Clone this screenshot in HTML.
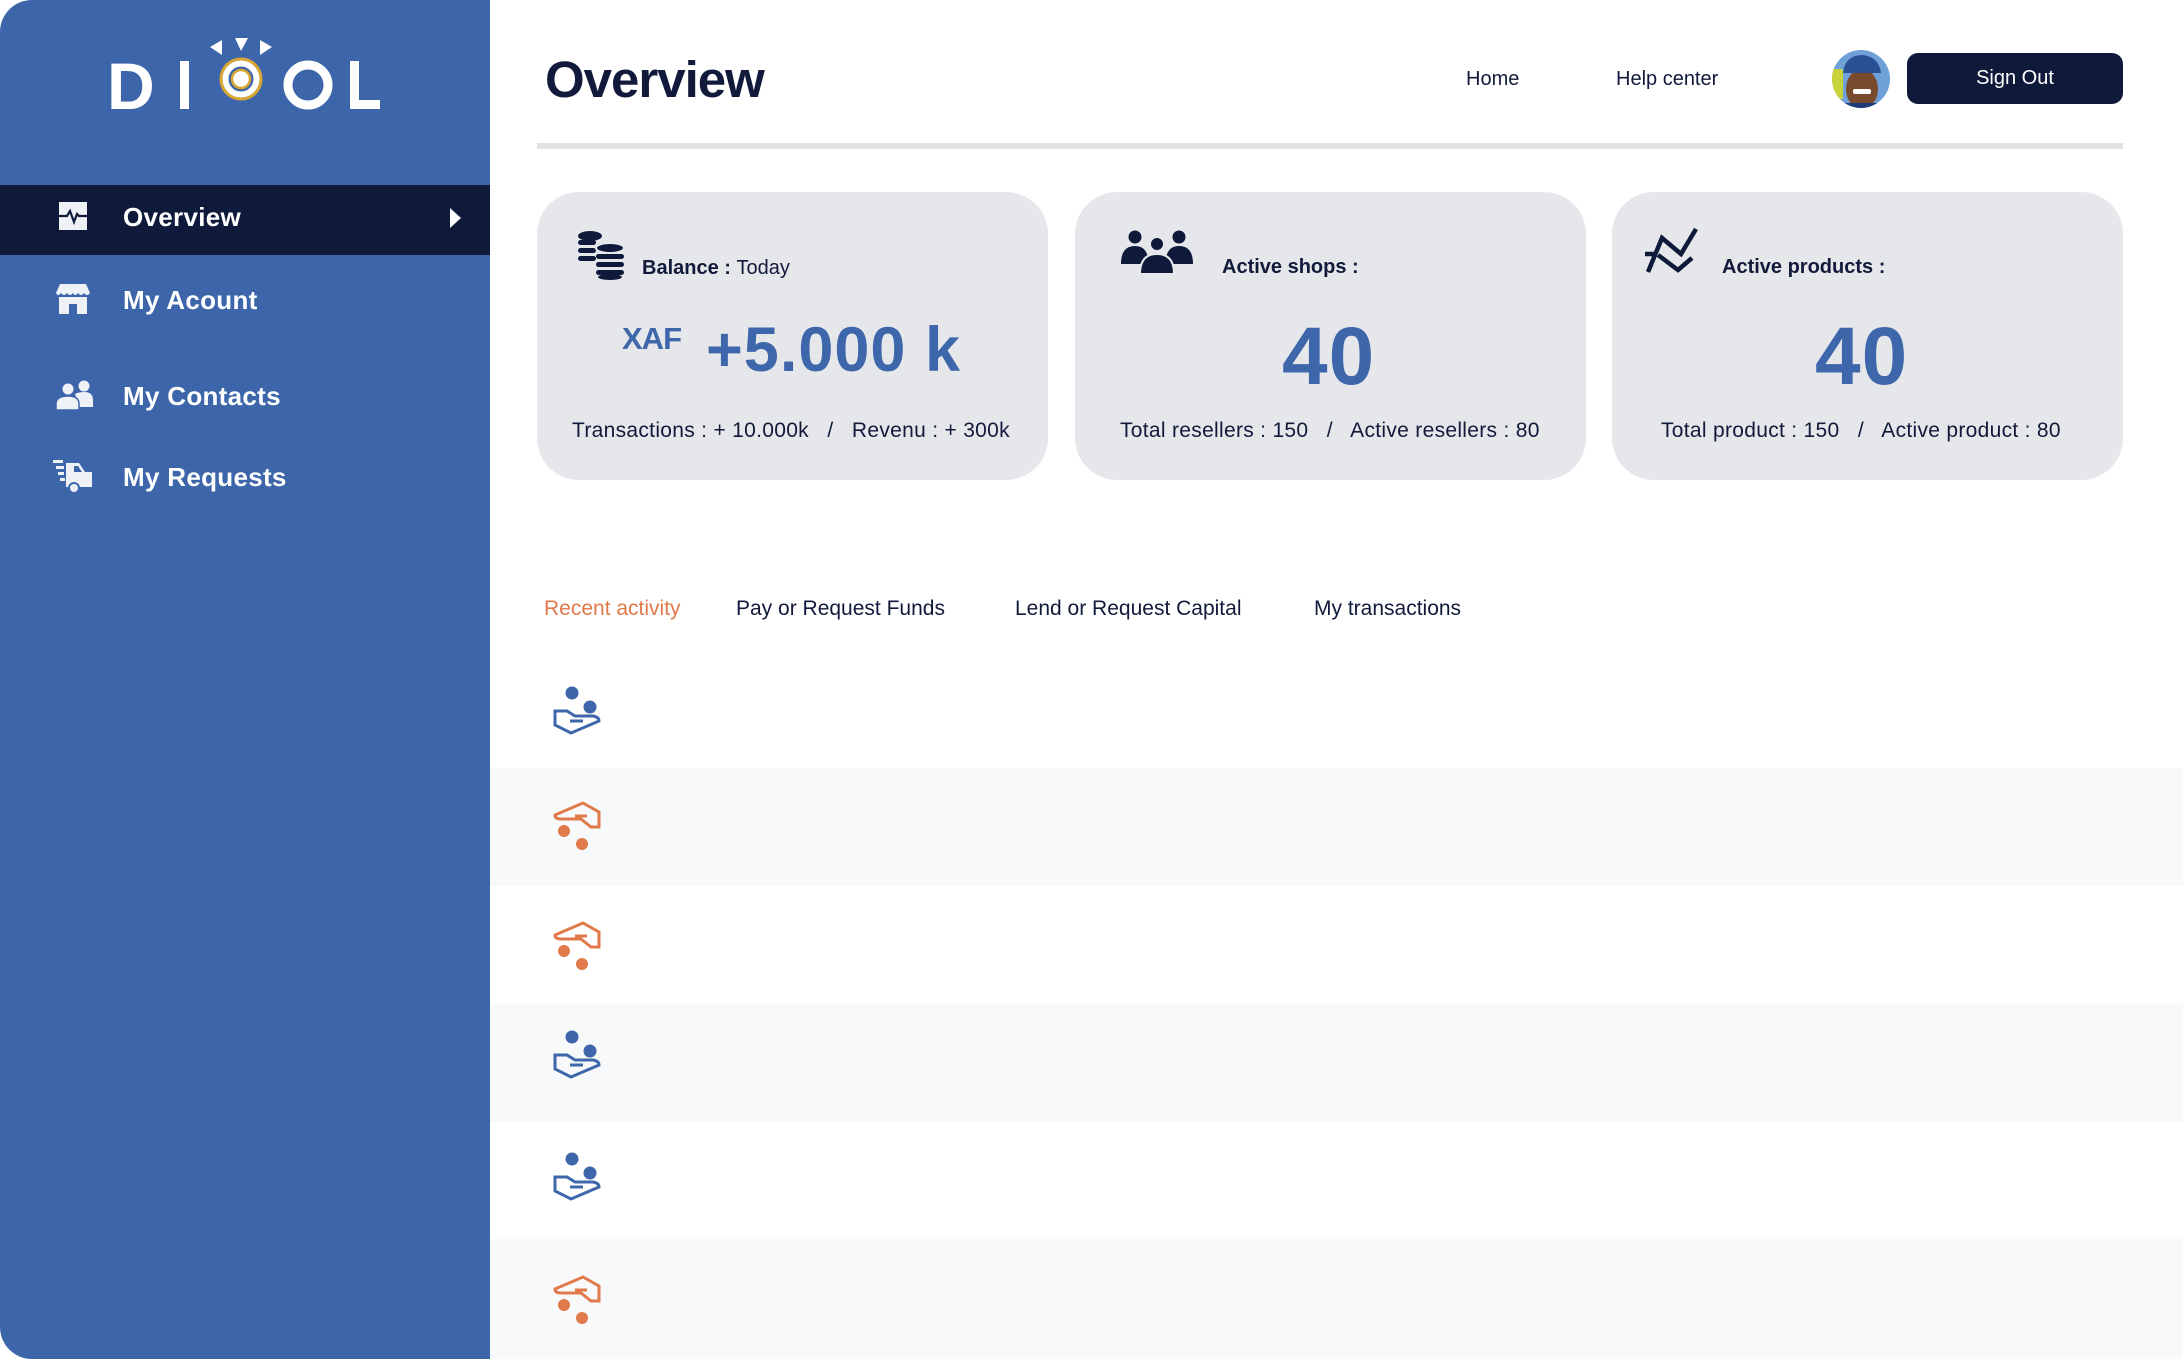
<!DOCTYPE html>
<html><head><meta charset="utf-8"><style>
*{margin:0;padding:0;box-sizing:border-box}
body{width:2183px;height:1359px;background:#fff;font-family:"Liberation Sans",sans-serif;position:relative;overflow:hidden;color:#111a3a}
.sb{position:absolute;left:0;top:0;width:490px;height:1359px;background:#3d66aa;border-radius:32px 0 0 32px}
.act{position:absolute;left:0;top:185px;width:490px;height:70px;background:#0f1a3a}
.mi{position:absolute;left:123px;color:#fff;font-size:26px;font-weight:bold;letter-spacing:0.3px}
.abs{position:absolute}
.card{position:absolute;top:192px;width:511px;height:288px;background:#e6e7eb;border-radius:42px}
.lbl{position:absolute;font-size:20px;font-weight:bold;color:#111a3a}
.foot{position:absolute;top:419px;font-size:21px;letter-spacing:0.3px;color:#111a3a;white-space:pre}
.big{position:absolute;color:#3d67aa;font-weight:bold}
.tab{position:absolute;top:597px;font-size:21px;color:#111a3a}
.row{position:absolute;left:490px;width:1693px;height:118px;background:#f8f9fb}
</style></head><body>
<div class="sb"></div>
<div class="act"></div>
<svg class="abs" style="left:100px;top:30px" width="300" height="90" viewBox="100 30 300 90">
<text x="107" y="109" font-family="Liberation Sans" font-weight="bold" font-size="66" fill="#fff">D</text>
<rect x="180" y="61" width="9" height="48" fill="#fff"/>
<polygon points="222,40 222,55 210,47" fill="#fff"/>
<polygon points="235,38 248,38 241,51" fill="#fff"/>
<polygon points="260,40 260,55 272,47" fill="#fff"/>
<circle cx="241" cy="79" r="20" fill="none" stroke="#d9a630" stroke-width="3"/>
<circle cx="241" cy="79" r="15.5" fill="none" stroke="#fff" stroke-width="6"/>
<circle cx="241" cy="79" r="9" fill="#fff" stroke="#d9a630" stroke-width="2.5"/>
<circle cx="308" cy="85" r="20" fill="none" stroke="#fff" stroke-width="9"/>
<path d="M350 61 V109 H380 V100 H359 V61 Z" fill="#fff"/>
</svg>
<svg class="abs" style="left:59px;top:202px" width="28" height="28" viewBox="0 0 28 28"><rect width="28" height="28" fill="#eef1f6"/><path d="M0 14 H8 L11 9 L15 20 L18 12 L20 14 H28" stroke="#0f1a3a" stroke-width="2.2" fill="none"/></svg>
<svg class="abs" style="left:56px;top:284px" width="34" height="30" viewBox="0 0 34 30"><path d="M4 0 H30 L34 9 Q31 13 28 9 Q25 13 22 9 Q19 13 17 9 Q14 13 11 9 Q8 13 5 9 Q2 13 0 9 Z" fill="#eef1f6"/><path d="M3 13 H31 V30 H21 V20 H13 V30 H3 Z" fill="#eef1f6"/></svg>
<svg class="abs" style="left:55px;top:380px" width="40" height="30" viewBox="0 0 40 30"><circle cx="29" cy="6" r="5.5" fill="#eef1f6"/><path d="M20 14 Q24 12 29 12 Q38 12 38 20 V27 H24 Z" fill="#eef1f6"/><circle cx="13" cy="9" r="5.5" fill="#eef1f6"/><path d="M1 30 V24 Q1 16 13 16 Q24 16 24 24 V30 Z" fill="#eef1f6" stroke="#3d66aa" stroke-width="1.5"/></svg>
<svg class="abs" style="left:53px;top:460px" width="40" height="34" viewBox="0 0 40 34"><rect x="0" y="0" width="10" height="3" fill="#eef1f6"/><rect x="3" y="6" width="8" height="3" fill="#eef1f6"/><rect x="5" y="12" width="6" height="3" fill="#eef1f6"/><rect x="7" y="18" width="5" height="3" fill="#eef1f6"/><path d="M13 3 H26 L32 12 H39 V27 H13 Z" fill="#eef1f6"/><path d="M21 6 H25 L29 12 H21 Z" fill="#3d66aa"/><circle cx="21" cy="28" r="5" fill="#eef1f6" stroke="#3d66aa" stroke-width="2"/></svg>
<div class="mi" style="top:202px">Overview</div>
<svg class="abs" style="left:450px;top:208px" width="11" height="20"><polygon points="0,0 11,10 0,20" fill="#fff"/></svg>
<div class="mi" style="top:285px">My Acount</div>
<div class="mi" style="top:381px">My Contacts</div>
<div class="mi" style="top:462px">My Requests</div>

<div class="abs" style="left:545px;top:50px;font-size:51px;font-weight:bold;letter-spacing:-1px;color:#111a3a">Overview</div>
<div class="abs" style="left:537px;top:143px;width:1586px;height:6px;background:#e2e2e2"></div>
<div class="abs" style="left:1466px;top:68px;font-size:20px">Home</div>
<div class="abs" style="left:1616px;top:68px;font-size:20px">Help center</div>
<svg class="abs" style="left:1831px;top:49px" width="60" height="60" viewBox="0 0 60 60"><defs><clipPath id="c"><circle cx="30" cy="30" r="29"/></clipPath></defs><g clip-path="url(#c)"><rect width="60" height="60" fill="#6fa0d8"/><rect x="0" y="20" width="12" height="30" fill="#c8d23a"/><ellipse cx="31" cy="40" rx="16" ry="20" fill="#7a4a2c"/><path d="M12 24 Q14 6 32 6 Q48 8 50 24 Z" fill="#2a4f94"/><rect x="22" y="40" width="18" height="5" rx="2" fill="#fff"/><rect x="0" y="54" width="60" height="6" fill="#1f3d7a"/></g></svg>
<div class="abs" style="left:1907px;top:53px;width:216px;height:51px;background:#0f1a3a;border-radius:11px;color:#fff;font-size:20px;text-align:center;line-height:51px">Sign Out</div>

<div class="card" style="left:537px"></div>
<div class="card" style="left:1075px"></div>
<div class="card" style="left:1612px"></div>

<svg class="abs" style="left:578px;top:231px" width="48" height="50" viewBox="0 0 48 50"><g fill="#0f1a3a"><ellipse cx="12" cy="5" rx="12" ry="5"/><rect x="0" y="9" width="18" height="5" rx="2.5"/><rect x="0" y="17" width="18" height="5" rx="2.5"/><rect x="0" y="25" width="18" height="5" rx="2.5"/><ellipse cx="32" cy="17" rx="14" ry="5" stroke="#e6e7eb" stroke-width="2"/><rect x="18" y="23" width="28" height="5" rx="2.5"/><rect x="18" y="31" width="28" height="5" rx="2.5"/><rect x="18" y="39" width="28" height="5" rx="2.5"/><ellipse cx="32" cy="46" rx="12" ry="3"/></g></svg>
<div class="lbl" style="left:642px;top:257px">Balance : <span style="font-weight:normal">Today</span></div>
<div class="big" style="left:622px;top:321px;font-size:31px;letter-spacing:-1px">XAF</div>
<div class="big" style="left:706px;top:314px;font-size:63px;letter-spacing:1px">+5.000 k</div>
<div class="foot" style="left:572px">Transactions : + 10.000k   /   Revenu : + 300k</div>

<svg class="abs" style="left:1120px;top:230px" width="74" height="44" viewBox="0 0 74 44"><g fill="#0f1a3a"><circle cx="15" cy="7" r="6.5"/><path d="M1 34 Q1 16 15 16 Q26 16 28 28 L24 34 Z"/><circle cx="59" cy="7" r="6.5"/><path d="M73 34 Q73 16 59 16 Q48 16 46 28 L50 34 Z"/><circle cx="37" cy="14" r="7" stroke="#e6e7eb" stroke-width="2"/><path d="M20 44 Q20 24 37 24 Q54 24 54 44 Z" stroke="#e6e7eb" stroke-width="2"/></g></svg>
<div class="lbl" style="left:1222px;top:256px">Active shops :</div>
<div class="big" style="left:1282px;top:310px;font-size:82px;letter-spacing:1px">40</div>
<div class="foot" style="left:1120px">Total resellers : 150   /   Active resellers : 80</div>

<svg class="abs" style="left:1645px;top:227px" width="56" height="48" viewBox="0 0 56 48"><g stroke="#0f1a3a" stroke-width="4.5" fill="none"><path d="M3 45 L17 11 L36 27 L51 2"/><path d="M0 27 H10"/><path d="M13 28 L33 43 L47 31"/></g></svg>
<div class="lbl" style="left:1722px;top:256px">Active products :</div>
<div class="big" style="left:1815px;top:310px;font-size:82px;letter-spacing:1px">40</div>
<div class="foot" style="left:1661px">Total product : 150   /   Active product : 80</div>

<div class="tab" style="left:544px;color:#e07a4a">Recent activity</div>
<div class="tab" style="left:736px">Pay or Request Funds</div>
<div class="tab" style="left:1015px">Lend or Request Capital</div>
<div class="tab" style="left:1314px">My transactions</div>

<div class="row" style="top:768px"></div>
<div class="row" style="top:1004px"></div>
<div class="row" style="top:1239px;height:120px"></div>

<svg width="0" height="0" style="position:absolute"><defs>
<g id="hb"><circle cx="19" cy="10" r="6.5" fill="#3d67aa"/><circle cx="37" cy="24" r="6.5" fill="#3d67aa"/><path d="M2 28 H14 L22 33 H40 Q46 34 46 38 L18 50 L2 42 Z M17 38 H30" fill="none" stroke="#3d67aa" stroke-width="3"/></g>
<g id="ho"><circle cx="11" cy="41" r="6" fill="#e07a4a"/><circle cx="29" cy="54" r="6" fill="#e07a4a"/><path d="M2 25 L30 13 L46 22 V37 H38 L28 29 H8 Q2 29 2 25 Z M22 26 H34" fill="none" stroke="#e07a4a" stroke-width="3"/></g>
</defs></svg>
<svg class="abs" style="left:553px;top:683px" width="50" height="56"><use href="#hb"/></svg>
<svg class="abs" style="left:553px;top:790px" width="50" height="62"><use href="#ho"/></svg>
<svg class="abs" style="left:553px;top:910px" width="50" height="62"><use href="#ho"/></svg>
<svg class="abs" style="left:553px;top:1027px" width="50" height="56"><use href="#hb"/></svg>
<svg class="abs" style="left:553px;top:1149px" width="50" height="56"><use href="#hb"/></svg>
<svg class="abs" style="left:553px;top:1264px" width="50" height="62"><use href="#ho"/></svg>
</body></html>
